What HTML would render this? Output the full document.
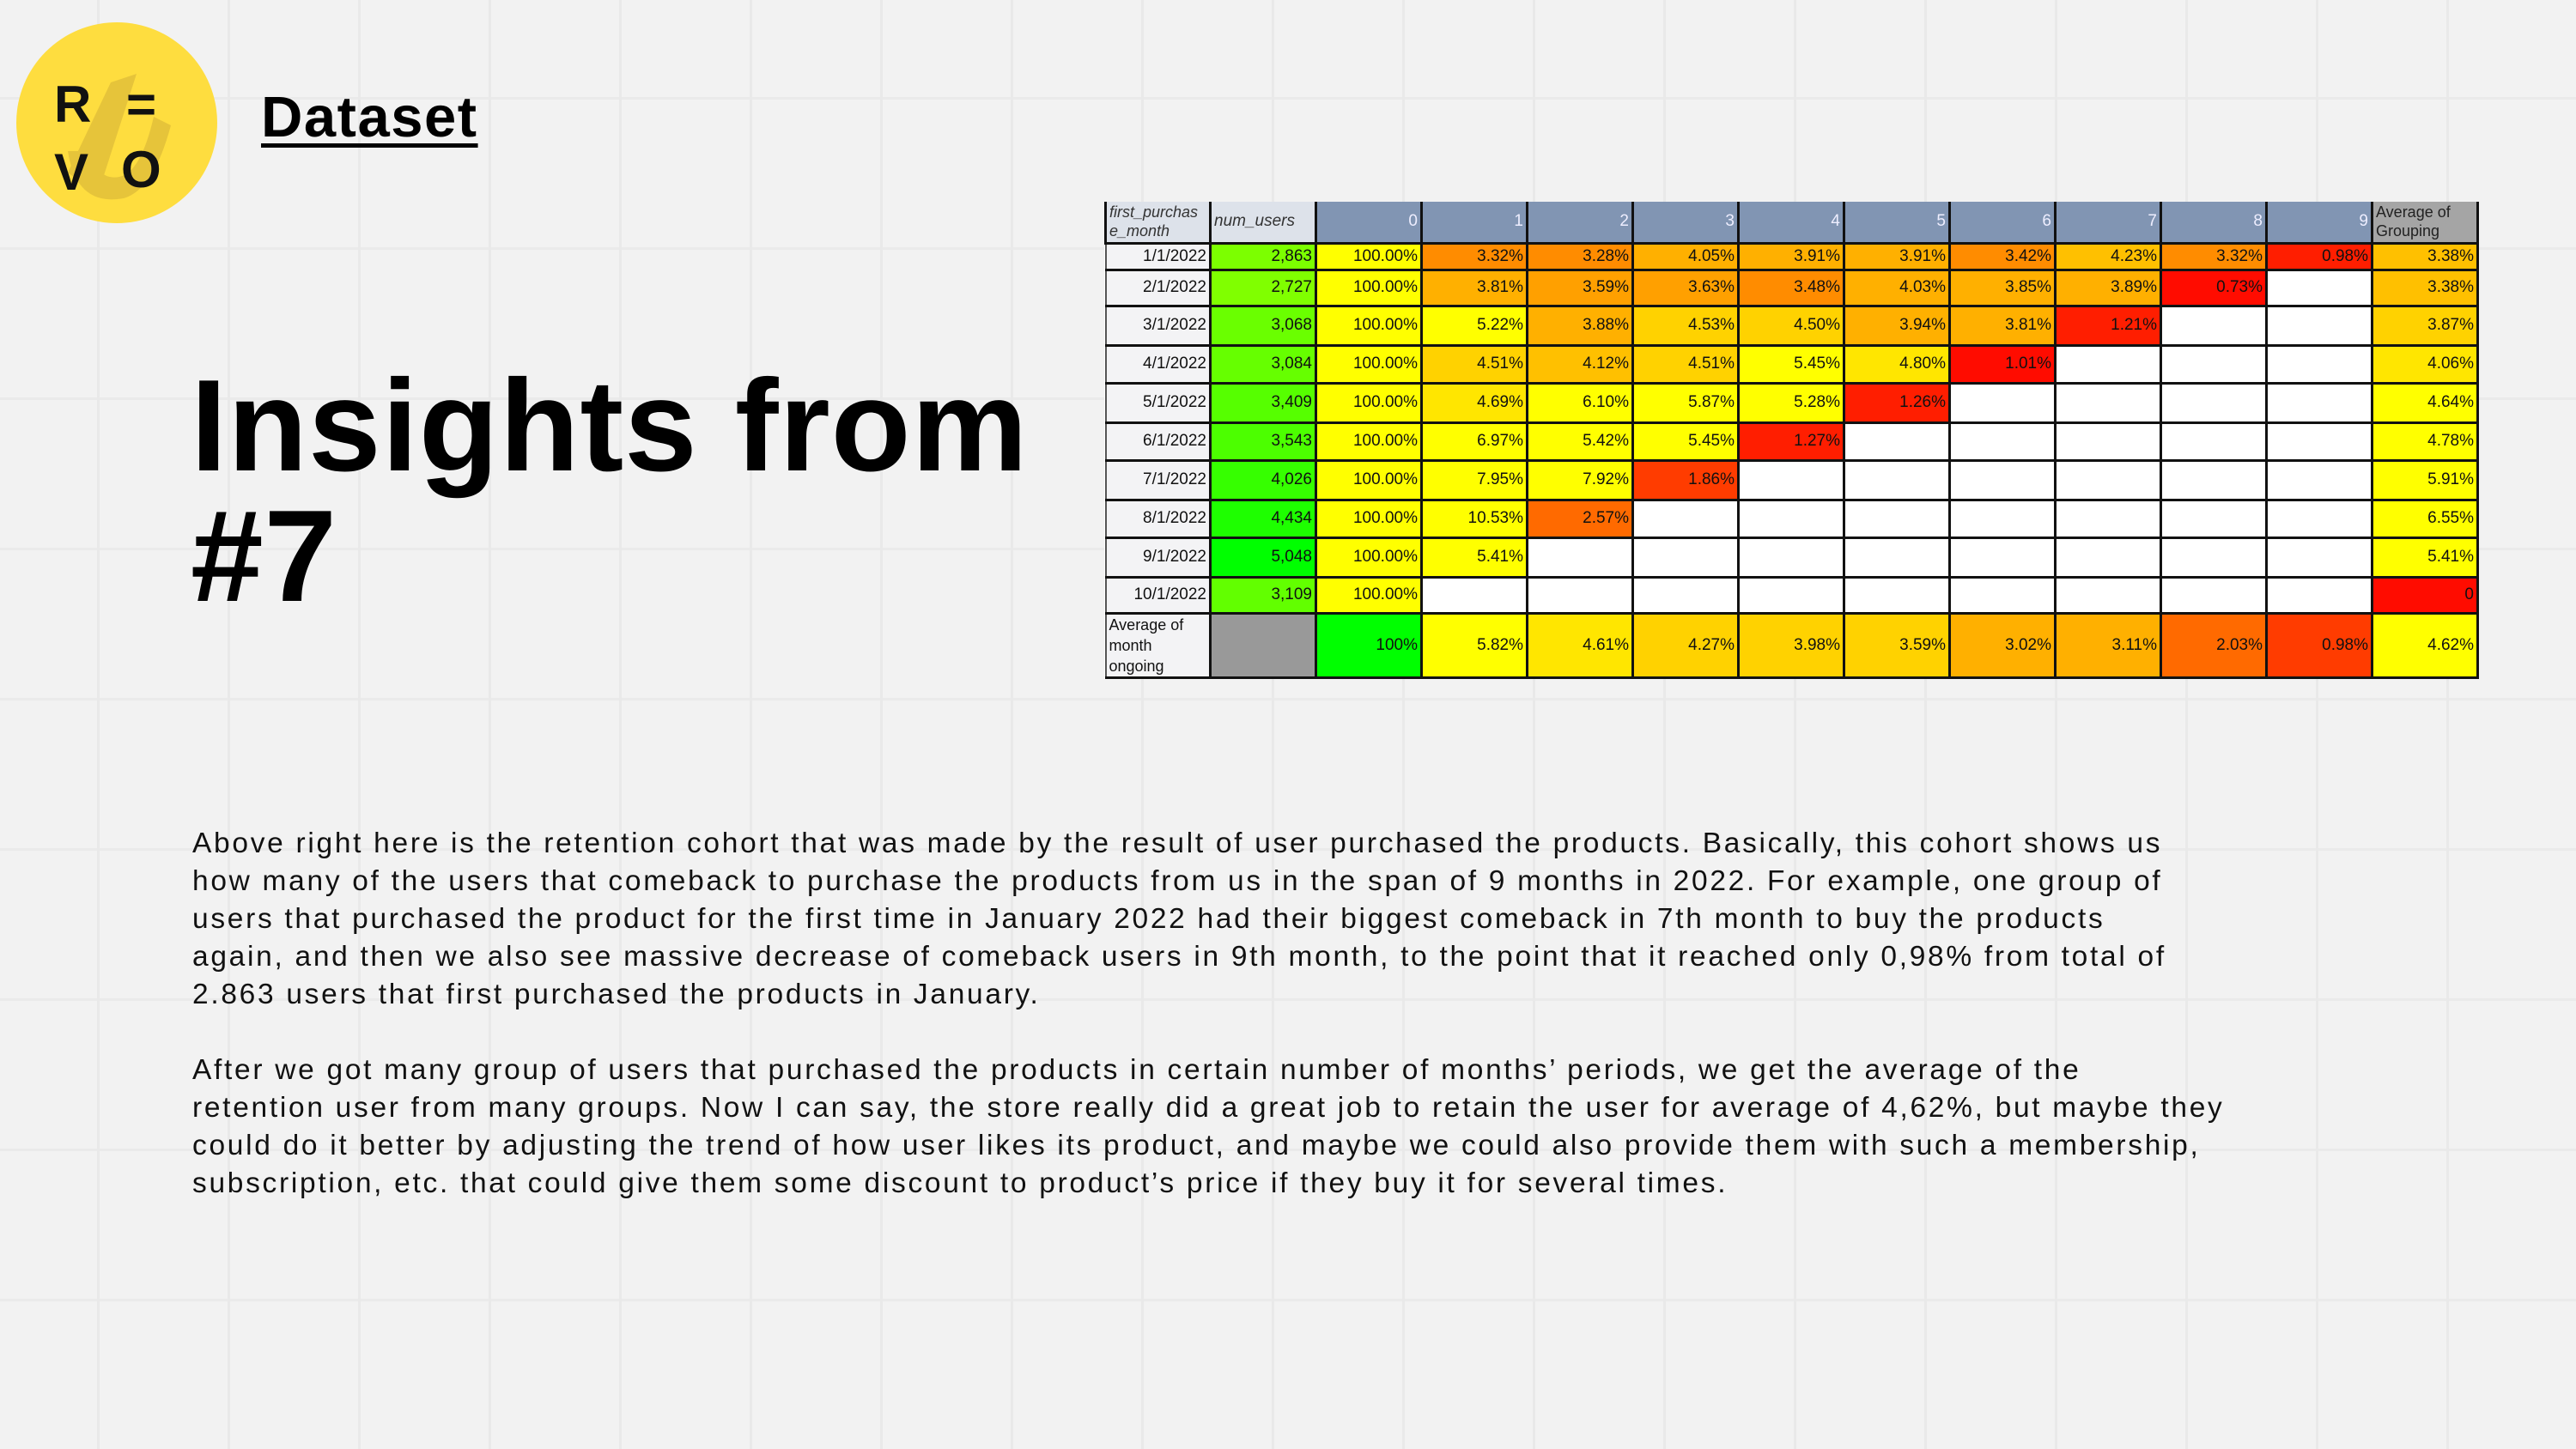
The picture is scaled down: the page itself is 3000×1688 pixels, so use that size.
<!DOCTYPE html>
<html><head><meta charset="utf-8">
<style>
html,body{margin:0;padding:0}
body{width:3000px;height:1688px;position:relative;overflow:hidden;background-color:#f2f2f2;
background-image:repeating-linear-gradient(90deg,transparent 0 113px,#e9e9e9 113px 116px,transparent 116px 152px),repeating-linear-gradient(0deg,transparent 0 172px,#eaeaea 172px 175px);
font-family:"Liberation Sans",sans-serif;}
.logo{position:absolute;left:19px;top:26px;width:234px;height:234px;border-radius:50%;background:#fedd3f;overflow:hidden}
.logo span{position:absolute;font-weight:bold;font-size:60px;color:#111;line-height:1}
.ds{position:absolute;left:304px;top:98px;font-size:67px;letter-spacing:1.5px;font-weight:bold;text-decoration:underline;text-decoration-thickness:5px;text-underline-offset:8px;color:#000}
h1{position:absolute;left:222px;top:420px;margin:0;font-size:152px;line-height:152px;font-weight:bold;letter-spacing:1px;color:#000}
.p{position:absolute;left:224px;font-size:33.5px;line-height:44px;letter-spacing:2.7px;color:#111;white-space:nowrap}
table{position:absolute;left:1286px;top:235px;width:1599px;border-collapse:collapse;table-layout:fixed;font-family:"Liberation Sans Narrow","Liberation Sans",sans-serif;font-size:19px;background:#fff}
td{border:3px solid #111;text-align:right;padding:0 3px;overflow:hidden;white-space:nowrap;color:#111}
tr.h td{background:#8195b3;color:#eef;border-color:#111;border-top:none;vertical-align:middle}
td.l{background:#f3f3f5;border-left:2px solid #555}
.y{background:#ffff00}.y1{background:#ffe600}.y2{background:#ffd200}.o1{background:#ffc000}.o2{background:#ffb000}.o3{background:#ffa000}.o4{background:#ff8c00}.o5{background:#ff6a00}.r1{background:#ff3c00}.r2{background:#ff1e00}.r3{background:#ff0c00}
</style></head><body>
<div class="logo">
<svg width="234" height="234" style="position:absolute;left:0;top:0"><path d="M110 70 L140 60 L95 200 L60 175 Z" fill="#e6c43a"/><path d="M60 150 Q70 215 125 205 Q160 195 180 120 L160 110 Q145 175 120 180 Q95 185 85 150 Z" fill="#e6c43a"/></svg>
<span style="left:44px;top:66px">R</span><span style="left:128px;top:66px">=</span><span style="left:44px;top:145px">V</span><span style="left:122px;top:142px">O</span></div>
<div class="ds">Dataset</div>
<h1>Insights from<br>#7</h1>
<div class="p" style="top:961px">Above right here is the retention cohort that was made by the result of user purchased the products. Basically, this cohort shows us<br>how many of the users that comeback to purchase the products from us in the span of 9 months in 2022. For example, one group of<br>users that purchased the product for the first time in January 2022 had their biggest comeback in 7th month to buy the products<br>again, and then we also see massive decrease of comeback users in 9th month, to the point that it reached only 0,98% from total of<br>2.863 users that first purchased the products in January.</div>
<div class="p" style="top:1225px">After we got many group of users that purchased the products in certain number of months’ periods, we get the average of the<br>retention user from many groups. Now I can say, the store really did a great job to retain the user for average of 4,62%, but maybe they<br>could do it better by adjusting the trend of how user likes its product, and maybe we could also provide them with such a membership,<br>subscription, etc. that could give them some discount to product’s price if they buy it for several times.</div>
<table>
<colgroup><col style="width:122px"><col span="12" style="width:123px"></colgroup>
<tr class="h" style="height:48px"><td style="background:#dde2ea;color:#333;text-align:left;font-style:italic;font-size:18px;line-height:22px;white-space:normal">first_purchas e_month</td><td style="background:#dde2ea;color:#333;text-align:left;font-style:italic">num_users</td><td>0</td><td>1</td><td>2</td><td>3</td><td>4</td><td>5</td><td>6</td><td>7</td><td>8</td><td>9</td><td style="background:#a5a5a5;color:#222;text-align:left;line-height:22px;white-space:normal;font-size:18px">Average of Grouping</td></tr>
<tr style="height:31px"><td class="l">1/1/2022</td><td style="background:#7cff00">2,863</td><td class="y">100.00%</td><td class="o4">3.32%</td><td class="o4">3.28%</td><td class="o2">4.05%</td><td class="o2">3.91%</td><td class="o2">3.91%</td><td class="o4">3.42%</td><td class="o1">4.23%</td><td class="o4">3.32%</td><td class="r2">0.98%</td><td class="o1">3.38%</td></tr>
<tr style="height:42px"><td class="l">2/1/2022</td><td style="background:#80ff00">2,727</td><td class="y">100.00%</td><td class="o2">3.81%</td><td class="o3">3.59%</td><td class="o3">3.63%</td><td class="o4">3.48%</td><td class="o2">4.03%</td><td class="o2">3.85%</td><td class="o2">3.89%</td><td class="r3">0.73%</td><td></td><td class="o1">3.38%</td></tr>
<tr style="height:46px"><td class="l">3/1/2022</td><td style="background:#6aff00">3,068</td><td class="y">100.00%</td><td class="y">5.22%</td><td class="o2">3.88%</td><td class="y2">4.53%</td><td class="y2">4.50%</td><td class="o2">3.94%</td><td class="o2">3.81%</td><td class="r2">1.21%</td><td></td><td></td><td class="y2">3.87%</td></tr>
<tr style="height:44px"><td class="l">4/1/2022</td><td style="background:#66ff00">3,084</td><td class="y">100.00%</td><td class="y2">4.51%</td><td class="o1">4.12%</td><td class="y2">4.51%</td><td class="y">5.45%</td><td class="y1">4.80%</td><td class="r3">1.01%</td><td></td><td></td><td></td><td class="y1">4.06%</td></tr>
<tr style="height:46px"><td class="l">5/1/2022</td><td style="background:#56ff00">3,409</td><td class="y">100.00%</td><td class="y1">4.69%</td><td class="y">6.10%</td><td class="y">5.87%</td><td class="y">5.28%</td><td class="r2">1.26%</td><td></td><td></td><td></td><td></td><td class="y">4.64%</td></tr>
<tr style="height:44px"><td class="l">6/1/2022</td><td style="background:#4cff00">3,543</td><td class="y">100.00%</td><td class="y">6.97%</td><td class="y">5.42%</td><td class="y">5.45%</td><td class="r2">1.27%</td><td></td><td></td><td></td><td></td><td></td><td class="y">4.78%</td></tr>
<tr style="height:46px"><td class="l">7/1/2022</td><td style="background:#36ff00">4,026</td><td class="y">100.00%</td><td class="y">7.95%</td><td class="y">7.92%</td><td class="r1">1.86%</td><td></td><td></td><td></td><td></td><td></td><td></td><td class="y">5.91%</td></tr>
<tr style="height:44px"><td class="l">8/1/2022</td><td style="background:#1eff00">4,434</td><td class="y">100.00%</td><td class="y">10.53%</td><td class="o5">2.57%</td><td></td><td></td><td></td><td></td><td></td><td></td><td></td><td class="y">6.55%</td></tr>
<tr style="height:46px"><td class="l">9/1/2022</td><td style="background:#00ff00">5,048</td><td class="y">100.00%</td><td class="y">5.41%</td><td></td><td></td><td></td><td></td><td></td><td></td><td></td><td></td><td class="y">5.41%</td></tr>
<tr style="height:42px"><td class="l">10/1/2022</td><td style="background:#62ff00">3,109</td><td class="y">100.00%</td><td></td><td></td><td></td><td></td><td></td><td></td><td></td><td></td><td></td><td class="r3">0</td></tr>
<tr style="height:74px"><td class="l" style="text-align:left;font-size:18px;line-height:24px;white-space:normal;vertical-align:middle">Average of month ongoing</td><td style="background:#999"></td><td style="background:#00ff00">100%</td><td class="y">5.82%</td><td class="y1">4.61%</td><td class="y2">4.27%</td><td class="y2">3.98%</td><td class="y2">3.59%</td><td class="o2">3.02%</td><td class="o2">3.11%</td><td class="o5">2.03%</td><td class="r1">0.98%</td><td class="y">4.62%</td></tr>
</table>
</body></html>
